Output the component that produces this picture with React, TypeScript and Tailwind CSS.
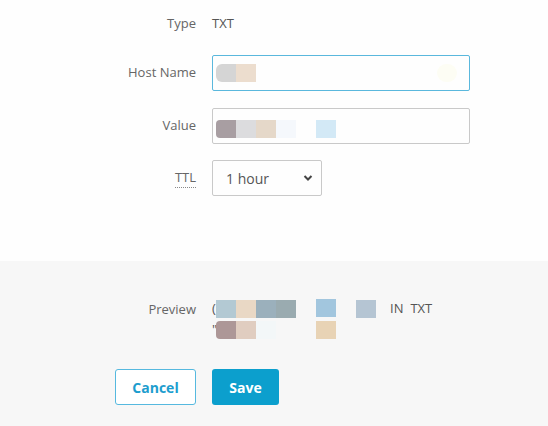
import React from "react";

const Block = ({ c, w = 20, cls = "" }: { c: string; w?: number; cls?: string }) => (
  <span className={`inline-block h-[18px] ${cls}`} style={{ background: c, width: w }} />
);

export default function App() {
  return (
    <div className="w-[548px] h-[426px] bg-white text-[13px] text-[#666] flex flex-col" style={{ fontFamily: '"Open Sans", sans-serif' }}>
      <div className="h-[261px] bg-[#fefefe] pt-[14px]">
        {/* Type */}
        <div className="flex items-center h-[20px]">
          <div className="w-[196px] text-right">Type</div>
          <div className="ml-[16px] text-[#555]">TXT</div>
        </div>
        {/* Host Name */}
        <div className="flex items-center mt-[21px]">
          <div className="w-[196px] text-right">Host Name</div>
          <div className="ml-[16px] w-[258px] h-[36px] border border-[#5ab8dd] rounded-[2px] flex items-center pl-[3px] relative">
            <Block c="#d5d5d5" cls="rounded-l-[6px] h-[14px]" />
            <Block c="#ecddce" cls="h-[14px]" />
            <span className="absolute left-[224px] top-[8px] w-[20px] h-[18px] bg-[#fdfdf4] rounded-full" />
          </div>
        </div>
        {/* Value */}
        <div className="flex items-center mt-[17px]">
          <div className="w-[196px] text-right">Value</div>
          <div className="ml-[16px] w-[258px] h-[36px] border border-[#c9c9c9] rounded-[2px] flex items-center pl-[3px] pt-[6px]">
            <Block c="#a89ea2" cls="rounded-l-[4px]" />
            <Block c="#dcdcde" />
            <Block c="#e5d8c9" />
            <Block c="#f5f8fc" />
            <span className="inline-block w-[20px]" />
            <Block c="#d3e9f6" />
          </div>
        </div>
        {/* TTL */}
        <div className="flex items-center mt-[16px]">
          <div className="w-[196px] text-right">
            <span className="border-b border-dotted border-[#888] pb-[1px]">TTL</span>
          </div>
          <div className="ml-[16px] w-[110px] h-[36px] border border-[#c9c9c9] rounded-[2px] flex items-center justify-between pl-[13px] pr-[8px] text-[#555] text-[14px]">
            <span>1 hour</span>
            <svg width="10" height="8" viewBox="0 0 10 8">
              <path d="M1.5 2 L5 5.5 L8.5 2" fill="none" stroke="#444" strokeWidth="2" />
            </svg>
          </div>
        </div>
      </div>
      <div className="flex-1 bg-[#f7f7f7] pt-[38px]">
        <div className="flex">
          <div className="w-[196px] text-right h-[20px] leading-[20px]">Preview</div>
          <div className="ml-[16px] text-[#555]">
            <div className="flex items-center h-[20px]">
              <span className="w-[4px] overflow-hidden">(</span>
              <Block c="#b3c9d3" />
              <Block c="#e9d8c5" />
              <Block c="#9bb0bc" />
              <Block c="#9aabb0" />
              <span className="inline-block w-[20px]" />
              <Block c="#a2c6de" cls="mt-[-2px]" />
              <span className="inline-block w-[20px]" />
              <Block c="#b5c5d3" />
              <span className="ml-[14px]">IN</span>
              <span className="ml-[7px]">TXT</span>
            </div>
            <div className="flex items-center h-[20px] mt-[1px]">
              <span className="w-[4px] overflow-hidden">"</span>
              <Block c="#ad9797" cls="rounded-l-[4px]" />
              <Block c="#e0cdc0" />
              <Block c="#f3f7f8" />
              <span className="inline-block w-[40px]" />
              <Block c="#e8d3b5" />
            </div>
          </div>
        </div>
        <div className="flex mt-[29px]">
          <div className="w-[196px] flex justify-end">
            <button className="w-[81px] h-[36px] border border-[#56b9df] rounded-[3px] bg-white text-[#1d9dce] font-bold text-[14px]">Cancel</button>
          </div>
          <button className="ml-[16px] w-[67px] h-[36px] rounded-[3px] bg-[#0c9fcd] text-white font-bold text-[14px]">Save</button>
        </div>
      </div>
    </div>
  );
}
